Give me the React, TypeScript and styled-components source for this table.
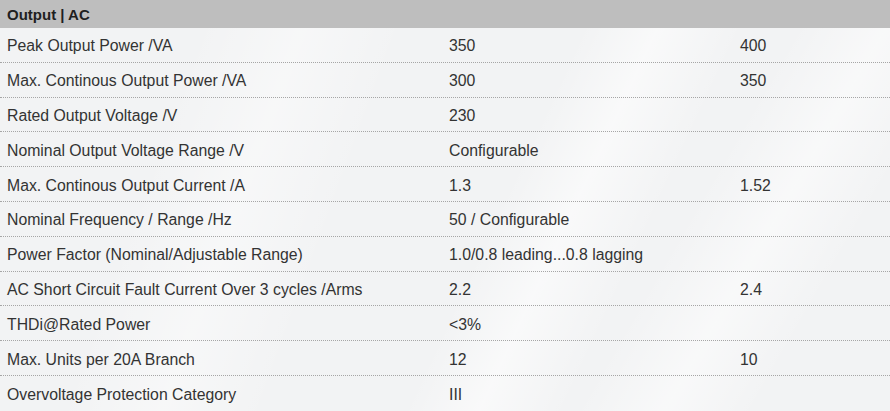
import React from "react";
import styled, { createGlobalStyle } from "styled-components";

const GlobalStyle = createGlobalStyle`
  html, body { margin: 0; padding: 0; }
  body {
    width: 890px;
    height: 411px;
    overflow: hidden;
    font-family: "Liberation Sans", Arial, sans-serif;
    color: #333333;
  }
`;

const Table = styled.div`
  width: 890px;
  height: 411px;
  display: flex;
  flex-direction: column;
  background:
    linear-gradient(115deg, rgba(255,255,255,0) 55%, rgba(255,255,255,0.55) 62%, rgba(255,255,255,0) 70%),
    linear-gradient(120deg, rgba(255,255,255,0) 72%, rgba(255,255,255,0.5) 80%, rgba(255,255,255,0) 88%),
    linear-gradient(110deg, rgba(255,255,255,0) 20%, rgba(255,255,255,0.4) 30%, rgba(255,255,255,0) 40%),
    #f2f3f4;
`;

const Header = styled.div`
  height: 28px;
  flex: none;
  background: #bebebe;
  display: flex;
  align-items: center;
  padding-left: 7px;
  font-weight: bold;
  font-size: 15px;
  color: #1f1f1f;
`;

const Row = styled.div<{ $last?: boolean }>`
  box-sizing: border-box;
  height: 34.8px;
  flex: none;
  display: grid;
  grid-template-columns: 442px 291px 1fr;
  align-items: center;
  padding: 3px 0 0 7px;
  font-size: 15.8px;
  border-bottom: ${(p) => (p.$last ? "none" : "1px dotted #a6a6a6")};
`;

const Cell = styled.div`
  white-space: nowrap;
`;

const rows: [string, string, string][] = [
  ["Peak Output Power /VA", "350", "400"],
  ["Max. Continous Output Power /VA", "300", "350"],
  ["Rated Output Voltage /V", "230", ""],
  ["Nominal Output Voltage Range /V", "Configurable", ""],
  ["Max. Continous Output Current /A", "1.3", "1.52"],
  ["Nominal Frequency / Range /Hz", "50 / Configurable", ""],
  ["Power Factor (Nominal/Adjustable Range)", "1.0/0.8 leading...0.8 lagging", ""],
  ["AC Short Circuit Fault Current Over 3 cycles /Arms", "2.2", "2.4"],
  ["THDi@Rated Power", "<3%", ""],
  ["Max. Units per 20A Branch", "12", "10"],
  ["Overvoltage Protection Category", "III", ""],
];

export default function App() {
  return (
    <>
      <GlobalStyle />
      <Table>
        <Header>Output | AC</Header>
        {rows.map((r, i) => (
          <Row key={i} $last={i === rows.length - 1}>
            <Cell>{r[0]}</Cell>
            <Cell>{r[1]}</Cell>
            <Cell>{r[2]}</Cell>
          </Row>
        ))}
      </Table>
    </>
  );
}
